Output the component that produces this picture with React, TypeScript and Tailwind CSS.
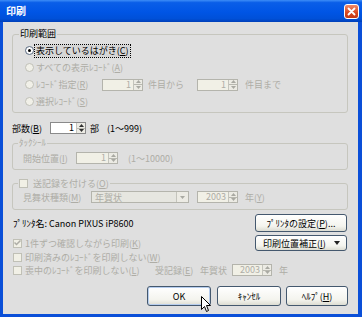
import React from "react";

const DIS = "text-[#aeada6]";

function SpinArrows({ disabled }: { disabled?: boolean }) {
  const c = disabled ? "#a9a9a2" : "#303030";
  return (
    <div className="flex flex-col w-[9px] h-full border-l border-[#c4c4bc] bg-[#ecebe4]">
      <div className="flex-1 flex items-center justify-center border-b border-[#b8b8b0]">
        <svg width="5" height="3" viewBox="0 0 5 3">
          <polygon points="2.5,0 5,3 0,3" fill={c} />
        </svg>
      </div>
      <div className="flex-1 flex items-center justify-center">
        <svg width="5" height="3" viewBox="0 0 5 3">
          <polygon points="0,0 5,0 2.5,3" fill={c} />
        </svg>
      </div>
    </div>
  );
}

function Spin({ value, className, disabled }: { value: string; className: string; disabled?: boolean }) {
  return (
    <div
      className={`flex h-[12px] border ${
        disabled ? "border-[#b4b4ac] bg-[#f1f0e6]" : "border-[#8a8a8a] bg-white"
      } ${className}`}
    >
      <div className={`flex-1 text-right pr-[2px] leading-[10px] ${disabled ? DIS : "text-black"}`}>{value}</div>
      <SpinArrows disabled={disabled} />
    </div>
  );
}

function Radio({ checked, disabled }: { checked?: boolean; disabled?: boolean }) {
  return (
    <span
      className={`flex items-center justify-center w-[9px] h-[9px] rounded-full border ${
        disabled ? "border-[#c0c0b8] bg-[#f1f0e8]" : "border-[#5a6a80] bg-white"
      }`}
    >
      {checked && <span className="w-[3px] h-[3px] rounded-full bg-black" />}
    </span>
  );
}

function Check({ checked }: { checked?: boolean }) {
  return (
    <span className="flex items-center justify-center w-[9px] h-[9px] border border-[#c0c0b6] bg-[#f1f0e6]">
      {checked && (
        <svg width="7" height="6" viewBox="0 0 7 6">
          <polyline points="0.5,2.5 2.5,4.5 6.5,0.5" fill="none" stroke="#aeada6" strokeWidth="1.5" />
        </svg>
      )}
    </span>
  );
}

function Button({ children, className }: { children: React.ReactNode; className: string }) {
  return (
    <div
      className={`flex items-center rounded-[3px] border border-[#44586e] bg-[linear-gradient(to_bottom,#ffffff_0%,#f4f4ee_70%,#dcdcd2_100%)] text-black ${className}`}
    >
      {children}
    </div>
  );
}

function TitleBar() {
  return (
    <div className="h-[22px] flex items-center justify-between pl-[6px] pr-[3px] bg-[linear-gradient(to_bottom,#3d8df7_0%,#0a5ee8_12%,#0055e5_55%,#0050d8_85%,#003fb8_100%)]">
      <span className="text-white font-bold text-[10px] leading-none">印刷</span>
      <div className="w-[15px] h-[15px] rounded-[3px] border border-white bg-[linear-gradient(to_bottom,#f08a6a,#d9471e_60%,#c33a16)] flex items-center justify-center">
        <svg width="9" height="9" viewBox="0 0 9 9">
          <path d="M1.5 1.5 L7.5 7.5 M7.5 1.5 L1.5 7.5" stroke="white" strokeWidth="1.8" strokeLinecap="round" />
        </svg>
      </div>
    </div>
  );
}

export default function App() {
  return (
    <div className="w-[362px] h-[317px] flex flex-col bg-[#0a4fd8] font-['Noto_Sans_CJK_JP','Noto_Sans_CJK_SC',sans-serif] text-[9px] leading-none overflow-hidden">
      <TitleBar />
      <div className="flex-1 ml-[3px] mr-[4px] mb-[3px] bg-[#dfdfdf] flex flex-col relative">
        {/* 印刷範囲 */}
        <fieldset className="mt-[6px] ml-[9px] mr-[10px] pt-[2px] pb-[2px] border border-[#c6c6be] rounded-[3px]">
          <legend className="ml-[6px] px-[1px] h-[12px] leading-[12px] text-black">印刷範囲</legend>
          <div className="flex items-center h-[17px] pl-[12px]">
            <Radio checked />
            <span className="ml-[1px] px-[1px] h-[12px] leading-[11px] outline-1 outline-dotted outline-black bg-[#d6d6d6] text-black">
              表示しているはがき(<u>C</u>)
            </span>
          </div>
          <div className={`flex items-center h-[17px] pl-[12px] ${DIS}`}>
            <Radio disabled />
            <span className="ml-[2px]">すべての表示ﾚｺｰﾄﾞ(<u>A</u>)</span>
          </div>
          <div className={`flex items-center h-[17px] pl-[12px] ${DIS}`}>
            <Radio disabled />
            <span className="ml-[2px] w-[66px]">ﾚｺｰﾄﾞ指定(<u>R</u>)</span>
            <Spin value="1" className="w-[41px]" disabled />
            <span className="ml-[5px] w-[49px]">件目から</span>
            <Spin value="1" className="w-[41px]" disabled />
            <span className="ml-[7px]">件目まで</span>
          </div>
          <div className={`flex items-center h-[17px] pl-[12px] ${DIS}`}>
            <Radio disabled />
            <span className="ml-[2px]">選択ﾚｺｰﾄﾞ(<u>S</u>)</span>
          </div>
        </fieldset>

        {/* 部数 */}
        <div className="flex items-center h-[14px] mt-[8px] ml-[9px] text-black">
          <span className="w-[38px]">部数(<u>B</u>)</span>
          <Spin value="1" className="w-[36px]" />
          <span className="ml-[4px] w-[17px]">部</span>
          <span>(1～999)</span>
        </div>

        {/* ﾀｯｸｼｰﾙ */}
        <fieldset className={`mt-[2px] ml-[9px] mr-[10px] pt-[2px] pb-[4px] border border-[#c6c6be] rounded-[3px] ${DIS}`}>
          <legend className="ml-[5px] px-[1px] h-[12px] leading-[12px]">ﾀｯｸｼｰﾙ</legend>
          <div className="flex items-center h-[14px] pl-[10px]">
            <span className="w-[53px]">開始位置(<u>I</u>)</span>
            <Spin value="1" className="w-[42px]" disabled />
            <span className="ml-[10px]">(1～10000)</span>
          </div>
        </fieldset>

        {/* 送記録 */}
        <fieldset className={`mt-[7px] ml-[9px] mr-[10px] pt-[1px] pb-[5px] border border-[#c6c6be] rounded-[3px] ${DIS}`}>
          <legend className="ml-[5px] px-[1px] h-[12px] flex items-center">
            <Check />
            <span className="ml-[5px]">送記録を付ける(<u>O</u>)</span>
          </legend>
          <div className="flex items-center h-[14px] pl-[10px]">
            <span className="w-[68px]">見舞状種類(<u>M</u>)</span>
            <div className="flex items-center w-[98px] h-[12px] border border-[#b4b4ac] bg-[#e6e6e0]">
              <span className="flex-1 pl-[3px]">年賀状</span>
              <div className="w-[12px] h-full flex items-center justify-center border-l border-[#c4c4bc] bg-[#ecebe4]">
                <svg width="5" height="3" viewBox="0 0 5 3">
                  <polygon points="0,0 5,0 2.5,3" fill="#a9a9a2" />
                </svg>
              </div>
            </div>
            <Spin value="2003" className="w-[41px] ml-[8px]" disabled />
            <span className="ml-[7px]">年(<u>Y</u>)</span>
          </div>
        </fieldset>

        {/* プリンタ */}
        <div className="flex items-center justify-between h-[18px] mt-[4px] pl-[10px] pr-[11px]">
          <span className="text-black">ﾌﾟﾘﾝﾀ名: Canon PIXUS iP8600</span>
          <Button className="w-[92px] h-[18px] justify-center">ﾌﾟﾘﾝﾀの設定(<u>P</u>)...</Button>
        </div>
        <div className="flex items-center justify-between h-[16px] mt-[3px] pl-[10px] pr-[11px]">
          <div className={`flex items-center ${DIS}`}>
            <Check checked />
            <span className="ml-[3px]">1件ずつ確認しながら印刷(<u>K</u>)</span>
          </div>
          <Button className="w-[92px] h-[16px] justify-between pl-[7px] pr-[6px]">
            <span>印刷位置補正(<u>I</u>)</span>
            <svg width="6" height="4" viewBox="0 0 6 4">
              <polygon points="0,0 6,0 3,4" fill="#222" />
            </svg>
          </Button>
        </div>
        <div className={`flex items-center h-[12px] pl-[10px] ${DIS}`}>
          <Check />
          <span className="ml-[3px]">印刷済みのﾚｺｰﾄﾞを印刷しない(<u>W</u>)</span>
        </div>
        <div className={`flex items-center h-[14px] pl-[10px] ${DIS}`}>
          <div className="flex items-center w-[142px]">
            <Check />
            <span className="ml-[3px]">喪中のﾚｺｰﾄﾞを印刷しない(<u>L</u>)</span>
          </div>
          <span className="w-[45px]">受記録(<u>E</u>)</span>
          <span className="w-[32px]">年賀状</span>
          <Spin value="2003" className="w-[40px]" disabled />
          <span className="ml-[7px]">年</span>
        </div>

        {/* buttons */}
        <div className="flex justify-end mt-[9px] pr-[10px]">
          <Button className="w-[64px] h-[20px] justify-center shadow-[inset_0_0_0_1px_#b6cdee]">OK</Button>
          <Button className="w-[64px] h-[20px] justify-center ml-[6px]">ｷｬﾝｾﾙ</Button>
          <Button className="w-[62px] h-[20px] justify-center ml-[5px]">ﾍﾙﾌﾟ(<u>H</u>)</Button>
        </div>

        {/* mouse cursor */}
        <svg className="absolute left-[198px] top-[274px]" width="11" height="17" viewBox="0 0 11 17">
          <path d="M0.5 0.5 L0.5 13.5 L3.5 10.5 L5.5 15.5 L7.5 14.5 L5.5 9.5 L9.5 9.5 Z" fill="white" stroke="black" strokeWidth="1" strokeLinejoin="round" />
        </svg>
      </div>
    </div>
  );
}
